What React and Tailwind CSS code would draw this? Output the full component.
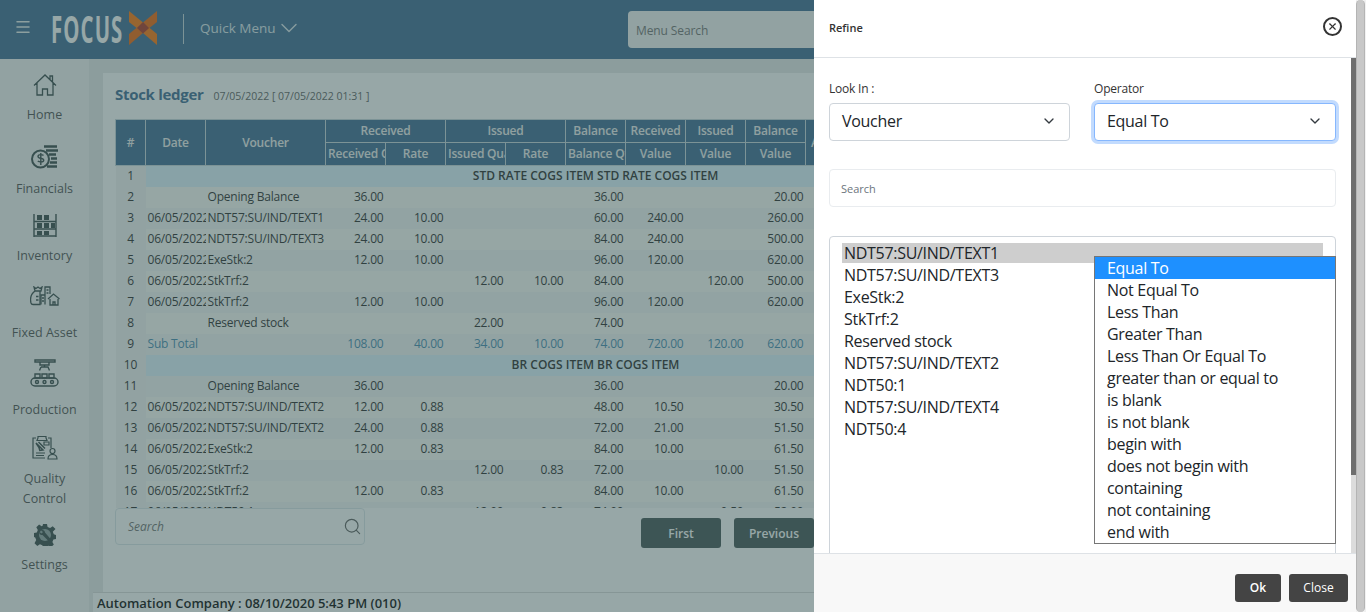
import { ChevronDown, Menu, Search, X } from 'lucide-react'

const rows = [
  { n: 1, section: 'STD RATE COGS ITEM STD RATE COGS ITEM' },
  { n: 2, voucher: 'Opening Balance', v: ['36.00', '', '', '', '36.00', '', '', '20.00'] },
  { n: 3, date: '06/05/2022', voucher: 'NDT57:SU/IND/TEXT1', v: ['24.00', '10.00', '', '', '60.00', '240.00', '', '260.00'] },
  { n: 4, date: '06/05/2022', voucher: 'NDT57:SU/IND/TEXT3', v: ['24.00', '10.00', '', '', '84.00', '240.00', '', '500.00'] },
  { n: 5, date: '06/05/2022', voucher: 'ExeStk:2', v: ['12.00', '10.00', '', '', '96.00', '120.00', '', '620.00'] },
  { n: 6, date: '06/05/2022', voucher: 'StkTrf:2', v: ['', '', '12.00', '10.00', '84.00', '', '120.00', '500.00'] },
  { n: 7, date: '06/05/2022', voucher: 'StkTrf:2', v: ['12.00', '10.00', '', '', '96.00', '120.00', '', '620.00'] },
  { n: 8, voucher: 'Reserved stock', v: ['', '', '22.00', '', '74.00', '', '', ''] },
  { n: 9, date: 'Sub Total', total: true, v: ['108.00', '40.00', '34.00', '10.00', '74.00', '720.00', '120.00', '620.00'] },
  { n: 10, section: 'BR COGS ITEM BR COGS ITEM' },
  { n: 11, voucher: 'Opening Balance', v: ['36.00', '', '', '', '36.00', '', '', '20.00'] },
  { n: 12, date: '06/05/2022', voucher: 'NDT57:SU/IND/TEXT2', v: ['12.00', '0.88', '', '', '48.00', '10.50', '', '30.50'] },
  { n: 13, date: '06/05/2022', voucher: 'NDT57:SU/IND/TEXT2', v: ['24.00', '0.88', '', '', '72.00', '21.00', '', '51.50'] },
  { n: 14, date: '06/05/2022', voucher: 'ExeStk:2', v: ['12.00', '0.83', '', '', '84.00', '10.00', '', '61.50'] },
  { n: 15, date: '06/05/2022', voucher: 'StkTrf:2', v: ['', '', '12.00', '0.83', '72.00', '', '10.00', '51.50'] },
  { n: 16, date: '06/05/2022', voucher: 'StkTrf:2', v: ['12.00', '0.83', '', '', '84.00', '10.00', '', '61.50'] },
  { n: 17, date: '06/05/2022', voucher: 'NDT50:1', v: ['', '', '12.00', '0.83', '74.00', '', '9.50', '52.00'] },
]

const vouchers = ['NDT57:SU/IND/TEXT1', 'NDT57:SU/IND/TEXT3', 'ExeStk:2', 'StkTrf:2', 'Reserved stock', 'NDT57:SU/IND/TEXT2', 'NDT50:1', 'NDT57:SU/IND/TEXT4', 'NDT50:4']
const operators = ['Equal To', 'Not Equal To', 'Less Than', 'Greater Than', 'Less Than Or Equal To', 'greater than or equal to', 'is blank', 'is not blank', 'begin with', 'does not begin with', 'containing', 'not containing', 'end with']

function IconHome() {
  return (
    <svg width="24" height="24" viewBox="0 0 24 24" fill="none" stroke="#3f4f4f" strokeWidth="1.300">
      <path d="M1 12.500L12 2l11 10.500M17 6.500V3h2.500v6M4 10v12h5.500v-6h5v6H20V10" />
    </svg>
  )
}

function IconFinancials() {
  return (
    <svg width="27" height="24" viewBox="0 0 27 24" fill="none" stroke="#3f4f4f" strokeWidth="1.600">
      <circle cx="9.500" cy="14" r="8.500" strokeWidth="2" />
      <path d="M12.500 10.500c-1-1.200-5.500-1.400-5.500.9 0 2.600 5.700 1.200 5.700 3.800 0 2.300-4.700 2-5.900.8M9.800 8v12" strokeWidth="1.400" />
      <path d="M13 1.500h13M15 5.500h12M18 9.500h7M20 13.500h6M19 17.500h7M16 21.500h10" strokeWidth="2.600" />
    </svg>
  )
}

function IconInventory() {
  return (
    <svg width="24" height="23" viewBox="0 0 24 23" fill="none">
      <path d="M1 0v23M23 0v23M1 7.500h22M1 15h22M1 22h22" stroke="#3f4f4f" strokeWidth="1.400" />
      <path d="M4 1h5v5H4zM11 1h5v5h-5zM4 9h5v5H4zM11 9h5v5h-5zM18 9h4v5h-4zM4 17h5v4H4zM11 17h5v4h-5z" fill="#3f4f4f" />
    </svg>
  )
}

function IconAsset() {
  return (
    <svg width="30" height="20" viewBox="0 0 30 20" fill="none" stroke="#3f4f4f" strokeWidth="1.300">
      <path d="M4 1l2 1.500L8 1l2 1.500L12 1l-1 4H5zM5 5C1 8 0 13 1 17c.3 1 1 1.500 2 1.500h7V5" />
      <path d="M6 10.500h2.500M6 14h2.500" />
      <path d="M11 18.500V9h4V18.500M15 18.500V1h5V8M16.500 4h2M16.500 7h2M12 12h2M12 15h2" />
      <path d="M18 13l5.500-5 6 5M20 13v6h8v-6M23 19v-3h2v3" />
    </svg>
  )
}

function IconProduction() {
  return (
    <svg width="29" height="28" viewBox="0 0 29 28" fill="none" stroke="#3f4f4f" strokeWidth="1.400">
      <path d="M5 1h20v2H5zM10 3v3h9V3M14.500 6v2M11 8h7l1.500 3.500M11 8l-1.500 3.500" />
      <path d="M5 15h5v4H5zM12 15h5v4h-5zM19 15h5v4h-5z" />
      <rect x="1" y="19" width="27" height="8" rx="4" />
      <circle cx="7" cy="23" r="1.500" />
      <circle cx="14.500" cy="23" r="1.500" />
      <circle cx="22" cy="23" r="1.500" />
    </svg>
  )
}

function IconQuality() {
  return (
    <svg width="26" height="25" viewBox="0 0 26 25" fill="none" stroke="#3f4f4f" strokeWidth="1.200">
      <path d="M16 3h3v10M13 23H1V3h3M6 3V1.500h8V3l1 2.500H5z" />
      <path d="M4 8l7 7-3.200.5L7 12.500zM6.500 7l6.500 6.500" strokeWidth="1.500" />
      <path d="M12 7h5v3h-5zM4 18h9M4 20.500h8" />
      <circle cx="20.500" cy="16" r="2.500" />
      <path d="M16 24c0-6 9-6 9 0z" />
    </svg>
  )
}

function IconSettings() {
  return (
    <svg width="22" height="22" viewBox="0 0 22 22">
      <path fill="#3f4f4f" d="M9 0h4l.6 3 2.500 1 2.600-1.700 2.800 2.800L18.800 7.700l1 2.500 2.200.8v4l-2.600.6-1 2.500 1.400 2.400-2.800 2.800-2.400-1.600-2.600 1-.8 1.300H9l-.6-2.700-2.500-1-2.600 1.700-2.800-2.800L2.200 16l-1-2.500L0 13V9l2.800-.6 1-2.500L2.300 3.300 5.100.5 7.600 2.200l1-.4z" />
      <circle cx="11" cy="11" r="6" fill="#97a7a7" />
      <path d="M7 6.500c2-1 4 0 4 2l6 7-2 2-6.500-6.500c-2 .5-3.500-1-3-3l2 1.500L9 8z" fill="#3f4f4f" />
    </svg>
  )
}

const navItems = [
  { label: 'Home', icon: <IconHome />, top: 'mt-[11px]', gap: 'mt-[5px]' },
  { label: 'Financials', icon: <IconFinancials />, top: 'mt-[17px]', gap: 'mt-[7px]' },
  { label: 'Inventory', icon: <IconInventory />, top: 'mt-[11px]', gap: 'mt-[6px]' },
  { label: 'Fixed Asset', icon: <IconAsset />, top: 'mt-[15px]', gap: 'mt-[12px]' },
  { label: 'Production', icon: <IconProduction />, top: 'mt-[15px]', gap: 'mt-[12px]' },
  { label: 'Quality Control', icon: <IconQuality />, top: 'mt-[12px]', gap: 'mt-[7px]' },
  { label: 'Settings', icon: <IconSettings />, top: 'mt-[11px]', gap: 'mt-[5px]' },
]

function Sidebar() {
  return (
    <aside className="w-[89px] shrink-0 bg-[#f5f5f5] flex flex-col items-center">
      {navItems.map((item) => (
        <div key={item.label} className={`${item.top} w-full flex flex-col items-center text-[12.5px] leading-[20px] text-[#555] text-center`}>
          <div className="h-[30px] flex items-center justify-center">{item.icon}</div>
          <span className={`${item.gap} w-[70px]`}>{item.label}</span>
        </div>
      ))}
    </aside>
  )
}

function LedgerTable() {
  const th = 'border border-[#c9d6dc] font-semibold text-[#f0f0f0] text-[12px] tracking-[-0.2px] text-center overflow-hidden whitespace-nowrap px-[2px] leading-[16px]'
  return (
    <table className="table-fixed border-collapse w-[930px] text-[12px] tracking-[-0.2px] leading-[16px] text-[#333]">
      <colgroup>
        <col className="w-[30px]" />
        <col className="w-[60px]" />
        <col className="w-[120px]" />
        {Array.from({ length: 9 }).map((_, i) => <col key={i} className="w-[60px]" />)}
        <col className="w-[180px]" />
      </colgroup>
      <thead className="bg-[#457197]">
        <tr className="h-[23px]">
          <th rowSpan={2} className={th}>#</th>
          <th rowSpan={2} className={th}>Date</th>
          <th rowSpan={2} className={th}>Voucher</th>
          <th colSpan={2} className={th}>Received</th>
          <th colSpan={2} className={th}>Issued</th>
          <th className={th}>Balance</th>
          <th className={th}>Received</th>
          <th className={th}>Issued</th>
          <th className={th}>Balance</th>
          <th rowSpan={2} className={th}>Avg Rate</th>
          <th rowSpan={2} className={th} />
        </tr>
        <tr className="h-[23px]">
          <th className={`${th} text-left`}>Received Qty</th>
          <th className={th}>Rate</th>
          <th className={`${th} text-left`}>Issued Qua</th>
          <th className={th}>Rate</th>
          <th className={`${th} text-left`}>Balance Qty</th>
          <th className={th}>Value</th>
          <th className={th}>Value</th>
          <th className={th}>Value</th>
        </tr>
      </thead>
      <tbody>
        {rows.map((r) => (
          <tr key={r.n} className="h-[21px] even:bg-[#fcfcf8] odd:bg-[#f5f7f7]">
            <td className="text-center bg-[#f5f5f5]">{r.n}</td>
            {r.section ? (
              <td colSpan={12} className="bg-[#e1f5fe] text-center font-semibold tracking-normal">{r.section}</td>
            ) : (
              <>
                <td className={`pl-[2px] overflow-hidden whitespace-nowrap ${r.total ? 'text-[#4d8fb3]' : ''}`}>{r.date}</td>
                <td className="pl-[2px] overflow-hidden whitespace-nowrap">{r.voucher}</td>
                {r.v.map((val, i) => (
                  <td key={i} className={`text-right pr-[2px] ${r.total ? 'text-[#4d8fb3]' : ''}`}>{val}</td>
                ))}
                <td />
                <td />
              </>
            )}
          </tr>
        ))}
      </tbody>
    </table>
  )
}

function Refine() {
  const selectBox = 'h-[38px] bg-white rounded-[4px] flex items-center justify-between pl-[12px] pr-[12px] pb-[2px] text-[16px] tracking-[-0.3px] text-[#212529]'
  return (
    <div className="absolute top-0 bottom-0 left-[814px] w-[542px] bg-white flex flex-col">
      <div className="h-[58px] shrink-0 border-b border-[#dee2e6] flex items-center justify-between pl-[15px] pr-[15px]">
        <span className="text-[11px] font-semibold text-[#333]">Refine</span>
        <span className="w-[19px] h-[19px] rounded-full border-2 border-[#333] flex items-center justify-center -mt-[5px] mr-[-1px]">
          <X size={11} strokeWidth={2.5} color="#333" />
        </span>
      </div>
      <div className="flex-1 relative overflow-hidden px-[15px]">
        <div className="grid grid-cols-[241px_242px] gap-x-[24px] mt-[23px] w-[507px]">
          <div>
            <label className="block text-[12px] tracking-[-0.2px] leading-[16px] text-[#333] mb-[6px]">Look In :</label>
            <div className={`${selectBox} border border-[#ced4da]`}>
              Voucher <ChevronDown size={16} strokeWidth={2} color="#343a40" />
            </div>
          </div>
          <div>
            <label className="block text-[12px] tracking-[-0.2px] leading-[16px] text-[#333] mb-[6px]">Operator</label>
            <div className={`${selectBox} border border-[#86b7fe] ring-[3px] ring-[#c2dbfe]`}>
              Equal To <ChevronDown size={16} strokeWidth={2} color="#343a40" />
            </div>
          </div>
        </div>
        <div className="mt-[28px] w-[507px] h-[38px] border border-[#e9ecef] rounded-[4px] flex items-center pl-[11px] pt-[2px] text-[11px] text-[#6c757d]">Search</div>
        <div className="mt-[29px] w-[507px] h-[340px] border border-[#ced4da] rounded-[4px] pt-[6px] px-[12px] text-[16px] tracking-[-0.3px] leading-[22px] text-[#212529]">
          {vouchers.map((v, i) => (
            <div key={v} className={`pl-[2px] ${i === 0 ? 'bg-[#cecece] h-[20px] leading-[20px] mb-[1px]' : ''}`}>{v}</div>
          ))}
        </div>
        <div className="absolute left-[280px] top-[198px] w-[242px] h-[288px] bg-white border border-[#767676] text-[16px] tracking-[-0.3px] leading-[22px] text-[#212529] overflow-hidden">
          {operators.map((o, i) => (
            <div key={o} className={`pl-[12px] ${i === 0 ? 'bg-[#1e90ff] text-white' : ''}`}>{o}</div>
          ))}
        </div>
        <div className="absolute right-0 top-0 bottom-0 w-[5px] bg-[#dcdcdc]">
          <div className="h-[417px] bg-[#6e6e6e]" />
        </div>
      </div>
      <div className="h-[59px] shrink-0 bg-[#f8f8f8] border-t border-[#dee2e6] flex items-center justify-end gap-[8px] pr-[8px] pt-[10px]">
        <button className="w-[46px] h-[28px] rounded-[3px] bg-[#444] text-white text-[12px] font-semibold">Ok</button>
        <button className="w-[59px] h-[28px] rounded-[3px] bg-[#444] text-white text-[12px]">Close</button>
      </div>
    </div>
  )
}

export default function App() {
  return (
    <div className="relative h-[612px] w-[1366px] overflow-hidden bg-white flex flex-col" style={{ fontFamily: '"Open Sans", "Noto Sans", sans-serif' }}>
      <header className="h-[59px] shrink-0 bg-[#457197] flex items-center text-white">
        <Menu size={18} className="ml-[14px] -mt-[5px]" strokeWidth={2} color="#e8eeee" />
        <div className="ml-[19px] flex items-center -mt-[3px]">
          <span className="w-[71px] inline-block whitespace-nowrap origin-left scale-x-[0.55] text-[37px] font-bold text-white leading-none tracking-[2px]">FOCUS</span>
          <svg width="28" height="34" viewBox="0 0 28 34" className="ml-[7px]">
            <path d="M0 0l28 23v11L14 22 0 11z" fill="#ff7a10" />
            <path d="M28 0v11L14 22 0 34V23z" fill="#f06a10" />
            <path d="M14 11l6 6-6 5.500L8 17z" fill="#b03a28" />
          </svg>
        </div>
        <div className="ml-[26px] h-[30px] border-l border-[#c9d6dc] -mt-[1px]" />
        <div className="ml-[16px] w-[93px] flex items-center text-[13.5px] text-[#dfe8ee] -mt-[3px] whitespace-nowrap">
          Quick Menu <ChevronDown size={28} strokeWidth={1.2} className="-ml-[1px] shrink-0" />
        </div>
        <div className="ml-[335px] w-[300px] h-[37px] -mt-[1px] bg-[#f5f5f5] rounded-[4px] flex items-center pl-[8px] pt-[3px] text-[12px] tracking-[-0.1px] text-[#777]">Menu Search</div>
      </header>
      <div className="flex-1 flex min-h-0 bg-[#e8eaea]">
        <Sidebar />
        <main className="flex-1 flex flex-col min-w-0">
          <div className="flex-1 ml-[14px] mt-[14px] bg-white pl-[12px] pr-[10px] min-h-0 flex flex-col">
            <div className="flex items-baseline gap-[10px] h-[46px] pt-[10px]">
              <span className="text-[15px] tracking-[-0.3px] font-bold text-[#457197]">Stock ledger</span>
              <span className="text-[10.5px] text-[#666]">07/05/2022 [ 07/05/2022 01:31 ]</span>
            </div>
            <div className="h-[389px] overflow-hidden">
              <LedgerTable />
            </div>
            <div className="flex items-start">
              <div className="w-[250px] h-[37px] border border-[#dde6ea] rounded-[4px] flex items-center justify-between pl-[12px] pr-[2px] text-[12px] italic text-[#777]">
                Search <Search size={19} strokeWidth={1.5} color="#666" />
              </div>
              <div className="ml-[276px] mt-[10px] flex gap-[13px]">
                <button className="w-[80px] h-[30px] rounded-[3px] bg-[#4a5a5a] pt-[1px] text-[12px] font-semibold text-white">First</button>
                <button className="w-[80px] h-[30px] rounded-[3px] bg-[#4a5a5a] pt-[1px] text-[12px] font-semibold text-white">Previous</button>
              </div>
            </div>
          </div>
          <footer className="h-[20px] ml-[4px] pl-[4px] shrink-0 bg-white border-t border-[#ddd] text-[13px] leading-[20px] font-semibold text-[#111]">
            Automation Company : 08/10/2020 5:43 PM (010)
          </footer>
        </main>
      </div>
      <div className="absolute inset-0 bg-[#2f4f4f]/50" />
      <Refine />
      <div className="absolute right-0 top-0 bottom-0 w-[10px] bg-[#f1f1f1]">
        <div className="absolute top-0 left-0 right-[1px] h-[612px] bg-[#c8c8c8] border-x border-[#b4b4b4] rounded-[5px]" />
      </div>
    </div>
  )
}
